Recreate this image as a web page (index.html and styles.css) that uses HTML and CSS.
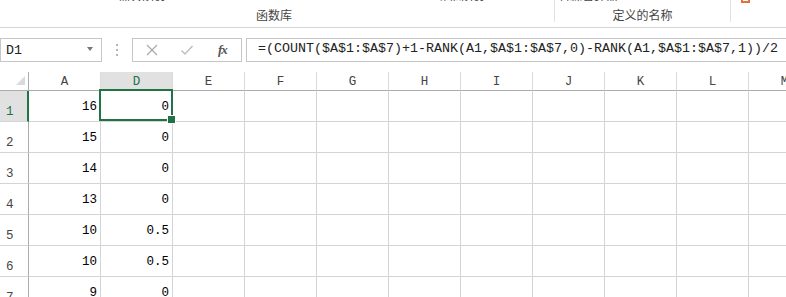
FILE: index.html
```html
<!DOCTYPE html>
<html>
<head>
<meta charset="utf-8">
<link rel="stylesheet" href="styles.css">
</head>
<body>
<div class="page">
  <div class="ribbon">
    <div class="group g1">
      <div class="cutrow"><span class="cut c1">插入函数</span><span class="cut c2">其他函数</span></div>
      <div class="label">函数库</div>
    </div>
    <div class="group g2">
      <div class="cutrow"><span class="cut c3">名称管理器</span><span class="cut c3b">三</span></div>
      <div class="label">定义的名称</div>
    </div>
    <div class="group g3">
      <div class="cutrow"><span class="orange"></span></div>
    </div>
  </div>

  <div class="fbar">
    <div class="namebox"><span class="name">D1</span><span class="drop"></span></div>
    <div class="dots"><i></i><i></i><i></i></div>
    <div class="fnbox">
      <svg class="ico" width="14" height="14" viewBox="0 0 14 14"><path d="M2 2 L12 12 M12 2 L2 12" stroke="#a9a9a9" stroke-width="1.2" fill="none"/></svg>
      <svg class="ico" width="14" height="14" viewBox="0 0 14 14"><path d="M1.5 7.5 L5 11 L12.5 3" stroke="#bdbdbd" stroke-width="1.4" fill="none"/></svg>
      <span class="fx">fx</span>
    </div>
    <div class="formula">=(COUNT($A$1:$A$7)+1-RANK(A1,$A$1:$A$7,0)-RANK(A1,$A$1:$A$7,1))/2</div>
  </div>

  <div class="grid">
    <div class="corner"><span class="tri"></span></div>
    <div class="ch">A</div><div class="ch sel">D</div><div class="ch">E</div><div class="ch">F</div><div class="ch">G</div><div class="ch">H</div><div class="ch">I</div><div class="ch">J</div><div class="ch">K</div><div class="ch">L</div><div class="ch">M</div>

    <div class="rh sel">1</div><div class="c">16</div><div class="c active">0</div><div class="c"></div><div class="c"></div><div class="c"></div><div class="c"></div><div class="c"></div><div class="c"></div><div class="c"></div><div class="c"></div><div class="c"></div>
    <div class="rh">2</div><div class="c">15</div><div class="c">0</div><div class="c"></div><div class="c"></div><div class="c"></div><div class="c"></div><div class="c"></div><div class="c"></div><div class="c"></div><div class="c"></div><div class="c"></div>
    <div class="rh">3</div><div class="c">14</div><div class="c">0</div><div class="c"></div><div class="c"></div><div class="c"></div><div class="c"></div><div class="c"></div><div class="c"></div><div class="c"></div><div class="c"></div><div class="c"></div>
    <div class="rh">4</div><div class="c">13</div><div class="c">0</div><div class="c"></div><div class="c"></div><div class="c"></div><div class="c"></div><div class="c"></div><div class="c"></div><div class="c"></div><div class="c"></div><div class="c"></div>
    <div class="rh">5</div><div class="c">10</div><div class="c">0.5</div><div class="c"></div><div class="c"></div><div class="c"></div><div class="c"></div><div class="c"></div><div class="c"></div><div class="c"></div><div class="c"></div><div class="c"></div>
    <div class="rh">6</div><div class="c">10</div><div class="c">0.5</div><div class="c"></div><div class="c"></div><div class="c"></div><div class="c"></div><div class="c"></div><div class="c"></div><div class="c"></div><div class="c"></div><div class="c"></div>
    <div class="rh">7</div><div class="c">9</div><div class="c">0</div><div class="c"></div><div class="c"></div><div class="c"></div><div class="c"></div><div class="c"></div><div class="c"></div><div class="c"></div><div class="c"></div><div class="c"></div>
  </div>
</div>
</body>
</html>
```

FILE: styles.css
```css
* { box-sizing: border-box; }
html, body { margin: 0; padding: 0; background: #fff; }
.page {
  width: 786px;
  height: 297px;
  overflow: hidden;
  font-family: "Liberation Mono", monospace;
}

/* ribbon */
.ribbon {
  display: flex;
  height: 28px;
  border-bottom: 1px solid #d5d5d5;
  font-family: "Noto Sans CJK SC", sans-serif;
  font-size: 12px;
  color: #444;
}
.group {
  display: flex;
  flex-direction: column;
  height: 22px;
}
.g1 { width: 555px; border-right: 1px solid #e1e1e1; }
.g2 { width: 176px; border-right: 1px solid #e1e1e1; }
.g3 { flex: 1; }
.cutrow {
  display: flex;
  height: 4px;
  overflow: hidden;
  width: 100%;
}
.cut {
  line-height: 12px;
  margin-top: -9px;
  white-space: nowrap;
  color: #444;
}
.c1 { margin-left: 118px; }
.c2 { margin-left: 271px; }
.c3 { margin-left: 3px; }
.c3b { margin-left: 4px; }
.orange {
  display: block;
  width: 9px;
  height: 3px;
  margin-left: 10px;
  border-bottom: 2px solid #e4703c;
  border-left: 2px solid #e4703c;
  border-right: 2px solid #e4703c;
  border-top: none;
}
.label {
  align-self: center;
  margin-top: 7px;
  line-height: 14px;
  white-space: nowrap;
}
.g1 .label { margin-left: -6px; }

/* formula bar */
.fbar {
  display: flex;
  align-items: center;
  height: 44px;
  padding: 10px 0;
}
.namebox {
  width: 102px;
  height: 24px;
  border: 1px solid #c6c6c6;
  display: flex;
  align-items: center;
  justify-content: space-between;
  padding: 0 8px 0 5px;
}
.name {
  font-size: 13.3px;
  color: #222;
  padding-top: 1px;
}
.drop {
  width: 0;
  height: 0;
  border-left: 3.5px solid transparent;
  border-right: 3.5px solid transparent;
  border-top: 4px solid #777;
  margin-top: -3px;
}
.dots {
  width: 30px;
  display: flex;
  flex-direction: column;
  align-items: center;
  gap: 3px;
  padding-right: 1px;
}
.dots i {
  display: block;
  width: 2px;
  height: 2px;
  background: #b5b5b5;
}
.fnbox {
  width: 110px;
  height: 24px;
  border: 1px solid #c6c6c6;
  display: flex;
  align-items: center;
  padding-left: 12px;
}
.fnbox .ico { display: block; }
.fnbox .ico + .ico { margin-left: 21px; }
.fx {
  margin-left: 24px;
  font-family: "Liberation Serif", serif;
  font-style: italic;
  font-weight: bold;
  font-size: 13px;
  color: #555;
  letter-spacing: -1px;
}
.formula {
  flex: 1;
  margin-left: 4px;
  margin-right: -3px;
  height: 24px;
  border: 1px solid #c6c6c6;
  padding: 0 0 3px 11px;
  display: flex;
  align-items: center;
  font-size: 13.33px;
  color: #222;
  white-space: nowrap;
  overflow: hidden;
}

/* grid */
.grid {
  display: grid;
  grid-template-columns: 29px repeat(11, 72px);
  grid-template-rows: 19px repeat(7, 31px);
  width: 821px;
}
.corner {
  border-right: 1px solid #ababab;
  border-bottom: 1px solid #ababab;
  position: relative;
}
.tri {
  position: absolute;
  left: 16px;
  top: 4px;
  width: 0;
  height: 0;
  border-left: 9px solid transparent;
  border-bottom: 9px solid #dadada;
}
.ch {
  border-right: 1px solid #dadada;
  border-bottom: 1px solid #ababab;
  display: flex;
  align-items: center;
  justify-content: center;
  font-size: 12.5px;
  color: #444;
  padding-top: 1px;
}
.ch.sel { background: #e1e1e1; color: #217346; }
.rh {
  border-right: 1px solid #ababab;
  border-bottom: 1px solid #d4d4d4;
  display: flex;
  align-items: flex-end;
  padding: 0 0 2px 6px;
  font-size: 12.5px;
  color: #444;
}
.rh.sel {
  background: #e1e1e1;
  color: #217346;
  border-right: 2px solid #217346;
}
.c {
  border-right: 1px solid #d4d4d4;
  border-bottom: 1px solid #d4d4d4;
  display: flex;
  align-items: center;
  justify-content: flex-end;
  padding: 1px 3px 0 0;
  font-size: 12.5px;
  color: #000;
}
.c.active { position: relative; }
.c.active::after {
  content: "";
  position: absolute;
  left: -2px;
  top: -2px;
  right: -1px;
  bottom: 0;
  border: 2px solid #217346;
}
.c.active::before {
  content: "";
  position: absolute;
  right: -4px;
  bottom: -3px;
  width: 7px;
  height: 7px;
  background: #217346;
  border: 1px solid #fff;
  z-index: 2;
}
```
